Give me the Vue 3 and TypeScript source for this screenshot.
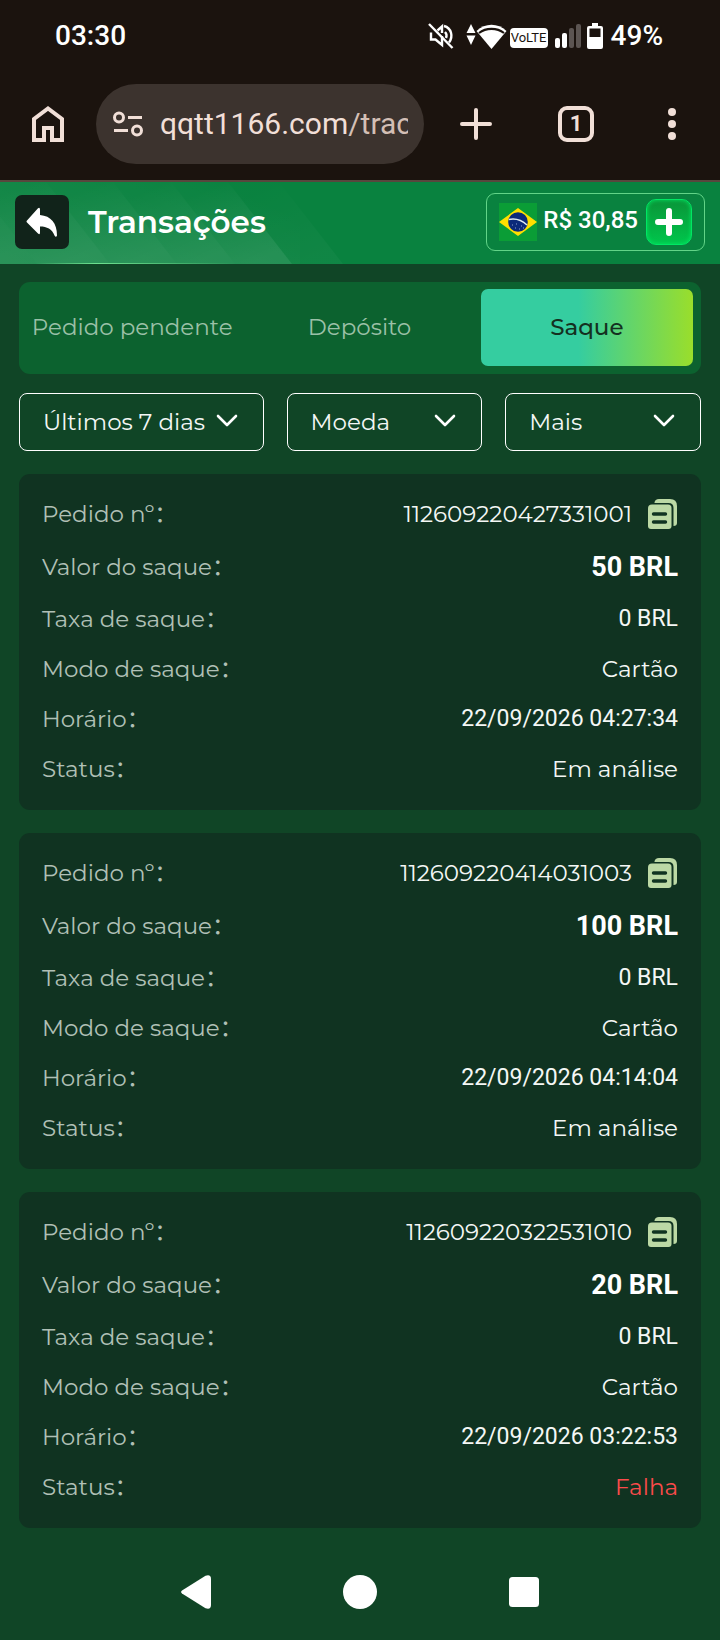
<script setup lang="ts">
import { ref } from 'vue'

interface Order {
  id: string
  amount: string
  fee: string
  mode: string
  time: string
  status: string
  failed?: boolean
}

const tabs = ['Pedido pendente', 'Depósito', 'Saque']
const activeTab = ref('Saque')

const filters = [
  { id: 'period', label: 'Período', options: ['Últimos 7 dias'] },
  { id: 'currency', label: 'Filtrar por moeda', options: ['Moeda'] },
  { id: 'more', label: 'Mais filtros', options: ['Mais'] },
]

const orders: Order[] = [
  { id: '112609220427331001', amount: '50 BRL', fee: '0 BRL', mode: 'Cartão', time: '22/09/2026 04:27:34', status: 'Em análise' },
  { id: '112609220414031003', amount: '100 BRL', fee: '0 BRL', mode: 'Cartão', time: '22/09/2026 04:14:04', status: 'Em análise' },
  { id: '112609220322531010', amount: '20 BRL', fee: '0 BRL', mode: 'Cartão', time: '22/09/2026 03:22:53', status: 'Falha', failed: true },
]

const beams = [
  { from: -40, to: 37, strength: 0.8 },
  { from: 37, to: 110, strength: 1 },
  { from: 110, to: 177, strength: 1 },
  { from: 177, to: 235, strength: 1 },
  { from: 235, to: 292, strength: 1 },
  { from: 292, to: 343, strength: 0.3 },
]

function copyId(id: string) {
  navigator.clipboard?.writeText(id)
}
</script>

<template>
  <div class="screen">
    <div class="chrome">
      <div class="status">
        <span class="clock">03:30</span>
        <div class="indicators">
          <svg class="i-mute" width="26" height="26" viewBox="0 0 26 26" fill="none" stroke="#fff" stroke-width="2.4">
            <path d="M3 9.500V16.500H7.500L14 22V13" />
            <path d="M9.500 7.500L14 3.500V10" />
            <path d="M17 9C18.500 10.500 19 12.500 18 15" />
            <path d="M16 3C23.500 5 25.500 13.500 21 19.500" />
            <path d="M1 1L24.500 25" />
          </svg>
          <svg class="i-wifi" width="42" height="28" viewBox="0 0 42 28">
            <path d="M5 2L9.500 11H.5ZM5 23L9.500 13.500H.5Z" fill="#fff" />
            <path d="M25.500 27L10.500 9C19 .5 32 .5 40.500 9Z" fill="#fff" />
            <path d="M13 11C20 5.500 31 5.500 38 11" fill="none" stroke="#1b130e" stroke-width="2.200" />
          </svg>
          <span class="volte">VoLTE</span>
          <svg class="i-signal" width="28" height="26" viewBox="0 0 28 26">
            <rect x="0" y="15" width="5" height="10" rx="2" fill="#fff" />
            <rect x="7" y="10" width="5" height="15" rx="2" fill="#fff" />
            <rect x="14" y="5" width="5" height="20" rx="2" fill="#5c5552" />
            <rect x="21" y="1" width="5" height="24" rx="2" fill="#5c5552" />
          </svg>
          <svg class="i-battery" width="16" height="26" viewBox="0 0 16 26">
            <path d="M5 0H11V3H14Q16 3 16 5V24Q16 26 14 26H2Q0 26 0 24V5Q0 3 2 3H5Z" fill="#fff" />
            <rect x="2.500" y="5.500" width="11" height="8.500" fill="#1b130e" />
          </svg>
          <span class="percent">49%</span>
        </div>
      </div>

      <div class="toolbar">
        <button class="tool" aria-label="Página inicial">
          <svg width="32" height="36" viewBox="0 0 32 36" fill="none" stroke="#f1dfd7" stroke-width="4">
            <path d="M2 34V13L16 2.500L30 13V34H20V22H12V34Z" />
          </svg>
        </button>
        <a class="url" href="#">
          <svg width="30" height="26" viewBox="0 0 30 26" fill="none" stroke="#f1dfd7" stroke-width="3">
            <circle cx="6" cy="6.500" r="4.500" />
            <path d="M15 6.500H29M1 19.500H15" />
            <circle cx="24" cy="19.500" r="4.500" />
          </svg>
          <span class="address">qqtt1166.com<span class="path">/trac</span></span>
        </a>
        <button class="tool t-new" aria-label="Nova aba">
          <svg width="32" height="32" viewBox="0 0 32 32" stroke="#f1dfd7" stroke-width="4" stroke-linecap="round">
            <path d="M16 2V30M2 16H30" />
          </svg>
        </button>
        <button class="tool t-count" aria-label="Abas abertas"><span class="count">1</span></button>
        <button class="tool" aria-label="Menu">
          <svg width="8" height="32" viewBox="0 0 8 32" fill="#f1dfd7">
            <circle cx="4" cy="4" r="4" />
            <circle cx="4" cy="16" r="4" />
            <circle cx="4" cy="28" r="4" />
          </svg>
        </button>
      </div>
    </div>

    <header class="header">
      <svg class="pattern" width="360" height="82" viewBox="0 0 360 82" aria-hidden="true">
        <defs>
          <linearGradient id="beam" x1="0.300" y1="0.100" x2="0.800" y2="0.900">
            <stop offset="0" stop-color="#fff" stop-opacity="0.010" />
            <stop offset="1" stop-color="#fff" stop-opacity="0.100" />
          </linearGradient>
          <linearGradient id="haze" x1="0" y1="1" x2="1" y2="0.400">
            <stop offset="0" stop-color="#fff" stop-opacity="0.060" />
            <stop offset="1" stop-color="#fff" stop-opacity="0" />
          </linearGradient>
          <linearGradient id="edge" x1="0" y1="0" x2="1" y2="0">
            <stop offset="0" stop-color="#6ee08f" stop-opacity="0" />
            <stop offset="0.300" stop-color="#6ee08f" />
            <stop offset="1" stop-color="#6ee08f" stop-opacity="0" />
          </linearGradient>
        </defs>
        <rect width="300" height="82" fill="url(#haze)" />
        <path
          v-for="b in beams"
          :key="b.to"
          :d="`M${b.from - 64} 0H${b.to - 64}L${b.to} 82H${b.from}Z`"
          :opacity="b.strength"
          fill="url(#beam)"
        />
        <rect x="36" y="81" width="200" height="1" fill="url(#edge)" />
      </svg>
      <button class="back" aria-label="Voltar">
        <svg width="32" height="30" viewBox="0 0 32 30" fill="#fff">
          <path d="M1 13.500L12 1.200Q14 0 14 2.500V8C25 9 31 16 31 28.500Q30 31 28.500 28.500C26 22 21 19.500 14 19.500V25.500Q14 28.500 12 26.500L1 15.500Q0 14.500 1 13.500Z" />
        </svg>
      </button>
      <h1>Transações</h1>
      <div class="balance">
        <svg width="38" height="38" viewBox="0 0 38 38" aria-hidden="true">
          <rect width="38" height="38" fill="#0a9d36" />
          <path d="M0 19L19 5L38 19L19 33Z" fill="#ffdf00" />
          <circle cx="19" cy="19" r="9.800" fill="#0b2a7a" />
          <path d="M9.800 16.500Q20 14.500 28 22" fill="none" stroke="#dfeaf2" stroke-width="1.500" />
          <path d="M13 22H14M17 21H18M16 25H17M20 26H21M22 23H23M24 25H25" stroke="#8fa3d0" stroke-width="1" />
        </svg>
        <span>R$ 30,85</span>
        <button class="add" aria-label="Adicionar saldo">
          <svg width="28" height="28" viewBox="0 0 28 28" stroke="#fff" stroke-width="6" stroke-linecap="round">
            <path d="M14 3V25M3 14H25" />
          </svg>
        </button>
      </div>
    </header>

    <main>
      <nav class="tabs" aria-label="Tipo de transação">
        <button
          v-for="tab in tabs"
          :key="tab"
          :class="{ active: tab === activeTab }"
          :aria-pressed="tab === activeTab"
          @click="activeTab = tab"
        >
          {{ tab }}
        </button>
      </nav>

      <div class="filters">
        <div v-for="f in filters" :key="f.id" class="filter">
          <select :id="f.id" :aria-label="f.label">
            <option v-for="o in f.options" :key="o">{{ o }}</option>
          </select>
          <svg width="22" height="14" viewBox="0 0 22 14" fill="none" stroke="#fff" stroke-width="2.600" stroke-linecap="round" stroke-linejoin="round">
            <path d="M2 2L11 11L20 2" />
          </svg>
        </div>
      </div>

      <div class="orders">
        <article v-for="o in orders" :key="o.id" class="card">
          <dl>
            <div class="row">
              <dt>Pedido nº：</dt>
              <dd class="order-id">
                {{ o.id }}
                <button class="copy" aria-label="Copiar número do pedido" @click="copyId(o.id)">
                  <svg width="30" height="30" viewBox="0 0 30 30">
                    <path d="M6.500 3.500Q7 0 11 0H22Q29 0 29 7V24Q29 27 25.500 27V9Q25.500 4 20.500 4H6.500Z" fill="#bcd9a5" />
                    <path d="M4 5.500H20Q23.500 5.500 23.500 9V27Q23.500 30 20.500 30H3Q0 30 0 27V9.500Q0 5.500 4 5.500Z" fill="#bcd9a5" />
                    <path d="M5.500 15H17.500M5.500 23H17.500" stroke="#103321" stroke-width="3.400" stroke-linecap="round" />
                  </svg>
                </button>
              </dd>
            </div>
            <div class="row amount"><dt>Valor do saque：</dt><dd>{{ o.amount }}</dd></div>
            <div class="row numeric"><dt>Taxa de saque：</dt><dd>{{ o.fee }}</dd></div>
            <div class="row"><dt>Modo de saque：</dt><dd>{{ o.mode }}</dd></div>
            <div class="row numeric"><dt>Horário：</dt><dd>{{ o.time }}</dd></div>
            <div class="row"><dt>Status：</dt><dd :class="{ failed: o.failed }">{{ o.status }}</dd></div>
          </dl>
        </article>
      </div>
    </main>

    <nav class="system" aria-label="Sistema">
      <button aria-label="Voltar à tela anterior">
        <svg width="30" height="34" viewBox="0 0 30 34" fill="#fff">
          <path d="M1 15.500L24.500 .8Q30 -1 30 4V30Q30 35 24.500 33.200L1 18.500Q-.8 17 1 15.500Z" />
        </svg>
      </button>
      <button aria-label="Início"><svg width="34" height="34" viewBox="0 0 34 34"><circle cx="17" cy="17" r="17" fill="#fff" /></svg></button>
      <button aria-label="Recentes"><svg width="30" height="30" viewBox="0 0 30 30"><rect width="30" height="30" rx="3.500" fill="#fff" /></svg></button>
    </nav>
  </div>
</template>

<style>
body {
  margin: 0;
  background: #104526;
}
</style>

<style scoped>
* {
  box-sizing: border-box;
}
.screen {
  min-height: 100vh;
  display: flex;
  flex-direction: column;
  background: #104526;
  color: #fff;
  font-family: Montserrat, Inter, "Noto Sans CJK SC", sans-serif;
  font-size: 23px;
  line-height: 30px;
}
button {
  display: flex;
  align-items: center;
  justify-content: center;
  padding: 0;
  border: 0;
  background: none;
  color: inherit;
  font: inherit;
  cursor: pointer;
}
svg {
  display: block;
  flex: none;
}
.chrome {
  background: #1b130e;
  border-bottom: 2px solid #58463d;
  font-family: Roboto, sans-serif;
}
.status {
  height: 72px;
  padding: 0 57px 0 55px;
  display: flex;
  align-items: center;
  justify-content: space-between;
  font-size: 28px;
  font-weight: 500;
}
.indicators {
  display: flex;
  align-items: center;
}
.i-wifi {
  margin-left: 12px;
}
.volte {
  width: 38px;
  height: 20px;
  margin: 3px 7px 0 2px;
  border-radius: 4px;
  background: #fff;
  color: #1b130e;
  font-size: 13px;
  font-weight: 400;
  line-height: 20px;
  text-align: center;
}
.i-battery {
  margin: 0 8px 0 4px;
}
.toolbar {
  height: 108px;
  padding: 0 44px 4px 32px;
  display: flex;
  align-items: center;
}
.tool {
  flex: none;
}
.url {
  flex: 1;
  min-width: 0;
  height: 80px;
  margin: 0 36px 0 32px;
  padding: 0 16px 0 17px;
  display: flex;
  align-items: center;
  gap: 17px;
  border-radius: 40px;
  background: #3c332e;
  color: #f1dfd7;
  font-size: 30px;
  line-height: 40px;
  text-decoration: none;
}
.address {
  flex: 1;
  overflow: hidden;
  white-space: nowrap;
}
.path {
  color: #d3bfb5;
}
.t-count {
  margin: 0 74px 0 66px;
}
.count {
  width: 36px;
  height: 36px;
  border: 4px solid #f1dfd7;
  border-radius: 9px;
  color: #f1dfd7;
  font-size: 22px;
  font-weight: 700;
  line-height: 28px;
}
.header {
  position: relative;
  height: 82px;
  padding: 0 15px 2px;
  display: flex;
  align-items: center;
  background: #09823f;
}
.pattern {
  position: absolute;
  left: 0;
  top: 0;
}
.back {
  position: relative;
  width: 54px;
  height: 54px;
  border-radius: 7px;
  background: #11231a;
}
h1 {
  position: relative;
  flex: 1;
  margin: 0 0 0 19px;
  font-size: 31px;
  font-weight: 600;
  line-height: 40px;
}
.balance {
  height: 58px;
  padding: 0 12px;
  display: flex;
  align-items: center;
  border: 1px solid #62d488;
  border-radius: 9px;
  font-family: Roboto, sans-serif;
  font-size: 24px;
  font-weight: 500;
}
.balance span {
  margin: 0 8px 4px 6px;
  white-space: nowrap;
}
.add {
  width: 46px;
  height: 46px;
  border: 1px solid #00e763;
  border-radius: 10px;
  background: linear-gradient(#0a9438, #00c64c);
  box-shadow: inset 0 0 4px #00e763;
}
main {
  padding: 18px 19px 0;
}
.tabs {
  height: 92px;
  display: grid;
  grid-template-columns: repeat(3, 1fr);
  border-radius: 11px;
  background: #0c622f;
}
.tabs button {
  margin: 7px 8px 8px 7px;
  padding-bottom: 2px;
  border-radius: 7px;
  color: #9bc0a7;
  white-space: nowrap;
}
.tabs .active {
  background: linear-gradient(90deg, #35cda0 46%, #9ade2b);
  color: #14301f;
  font-weight: 500;
}
.filters {
  display: grid;
  grid-template-columns: 5fr 4fr 4fr;
  gap: 23px;
  margin: 19px 0 23px;
}
.filter {
  position: relative;
}
.filter select {
  width: 100%;
  height: 58px;
  padding: 0 44px 0 23px;
  border: 1px solid #fff;
  border-radius: 8px;
  appearance: none;
  background: none;
  color: #f4f7f5;
  font: inherit;
}
.filter svg {
  position: absolute;
  right: 26px;
  top: 21px;
  pointer-events: none;
}
.orders {
  display: grid;
  gap: 23px;
}
.card {
  padding: 15px 23px 16px;
  border-radius: 11px;
  background: #103321;
}
dl {
  margin: 0;
}
.row {
  height: 50px;
  display: flex;
  align-items: center;
  justify-content: space-between;
}
dt {
  color: #b0c0b6;
}
dd {
  margin: 0;
  color: #f4f7f5;
}
.order-id {
  display: flex;
  align-items: center;
  gap: 16px;
}
.amount {
  height: 55px;
}
.amount dd {
  color: #fff;
  font-family: Roboto, sans-serif;
  font-size: 27px;
  font-weight: 700;
}
.numeric dd {
  font-family: Roboto, sans-serif;
}
dd.failed {
  color: #fb4b4b;
}
.system {
  height: 96px;
  margin-top: auto;
  display: flex;
  align-items: center;
  justify-content: center;
  gap: 68px;
}
.system button {
  width: 96px;
  height: 64px;
}
</style>
